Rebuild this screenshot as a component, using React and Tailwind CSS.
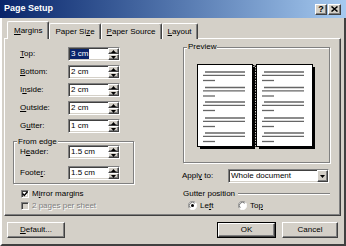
import React from 'react';

const raised =
  'border border-t-white border-l-white border-r-[#404040] border-b-[#404040] shadow-[inset_-1px_-1px_0_#808080]';
const sunken =
  'border border-t-[#808080] border-l-[#808080] border-r-white border-b-white shadow-[inset_1px_1px_0_#404040,inset_-1px_-1px_0_#d4d0c8]';
const etched = 'border border-[#808080] shadow-[inset_1px_1px_0_#fff,1px_1px_0_#fff]';

const U = ({ children }) => <span className="underline underline-offset-[1px]">{children}</span>;

const Arrow = ({ up }) => (
  <svg width="5" height="3" viewBox="0 0 5 3">
    <path d={up ? 'M2.5 0 L5 3 L0 3 Z' : 'M0 0 L5 0 L2.5 3 Z'} fill="#000" />
  </svg>
);

// champ numérique avec flèches
const Spin = ({ value, selected }) => (
  <div className={`w-[52px] h-[14px] bg-white flex ${sunken}`}>
    <div className="flex-1 flex items-center pl-[1px]">
      {selected ? (
        <span className="bg-[#0a246a] text-white leading-[10px] px-[1px]">{value}</span>
      ) : (
        <span className="leading-[10px] px-[1px]">{value}</span>
      )}
    </div>
    <div className="w-[11px] flex flex-col">
      <div className={`flex-1 bg-[#d4d0c8] flex items-center justify-center ${raised}`}>
        <Arrow up />
      </div>
      <div className={`flex-1 bg-[#d4d0c8] flex items-center justify-center ${raised}`}>
        <Arrow />
      </div>
    </div>
  </div>
);

const Row = ({ label, value, selected }) => (
  <div className="flex items-center h-[14px]">
    <span className="w-[48px]">{label}</span>
    <Spin value={value} selected={selected} />
  </div>
);

const Check = ({ checked, disabled }) => (
  <div
    className={`w-[8px] h-[8px] flex items-center justify-center ${disabled ? 'bg-[#d4d0c8]' : 'bg-white'} ${sunken}`}
  >
    {checked && (
      <svg width="6" height="6" viewBox="0 0 6 6">
        <path d="M0.5 2.5 L2.3 4.5 L5.5 0.8" stroke="#000" strokeWidth="1.4" fill="none" />
      </svg>
    )}
  </div>
);

const Radio = ({ on }) => (
  <svg width="9" height="9" viewBox="0 0 12 12">
    <circle cx="6" cy="6" r="5.5" fill="#fff" />
    <path d="M10 2 A5.5 5.5 0 0 0 2 10" stroke="#808080" strokeWidth="1" fill="none" />
    <path d="M2 10 A5.5 5.5 0 0 0 10 2" stroke="#fff" strokeWidth="1" fill="none" />
    <path d="M9 3 A4.2 4.2 0 0 0 3 9" stroke="#404040" strokeWidth="1" fill="none" />
    {on && <circle cx="6" cy="6" r="2" fill="#000" />}
  </svg>
);

// aperçu : livre ouvert
const Book = () => {
  const groups = [8, 23.5, 38, 54, 69];
  const page = (dx) =>
    groups.map((y) => (
      <g key={`${dx}-${y}`} stroke="#666" strokeWidth="1.3">
        <line x1={dx + 8} y1={y} x2={dx + 48} y2={y} />
        <line x1={dx + 6} y1={y + 3.3} x2={dx + 48} y2={y + 3.3} />
        <line x1={dx + 6} y1={y + 8.5} x2={dx + 18} y2={y + 8.5} />
      </g>
    ));
  return (
    <svg width="120" height="88" viewBox="0 0 120 88">
      <rect x="3" y="3" width="55" height="82" fill="#000" />
      <rect x="62" y="3" width="56" height="82" fill="#000" />
      <rect x="0.5" y="0.5" width="55" height="82" fill="#fff" stroke="#000" />
      <rect x="59.5" y="0.5" width="56" height="82" fill="#fff" stroke="#000" />
      {page(0)}
      {page(59)}
      <line x1="56.5" y1="1" x2="56.5" y2="83" stroke="#000" strokeWidth="1.6" strokeDasharray="1.3 1.3" />
      <line x1="58.5" y1="1.6" x2="58.5" y2="83" stroke="#000" strokeWidth="1.6" strokeDasharray="1.3 1.3" />
    </svg>
  );
};

const Tab = ({ children, active }) => (
  <div
    className={`-mb-px relative flex items-center justify-center rounded-t-[2px] bg-[#d4d0c8] border border-b-0 border-t-white border-l-white border-r-[#404040] shadow-[inset_-1px_0_0_#808080] ${
      active ? 'h-[18px] z-10 px-[6px]' : 'h-[16px] px-[5px]'
    }`}
  >
    {children}
  </div>
);

const App = () => {
  return (
    <div className="w-[346px] h-[246px] bg-[#d4d0c8] flex flex-col overflow-hidden text-[8px] text-black font-['Liberation_Sans',Arial,sans-serif]">
      {/* barre de titre */}
      <div className="h-[18px] bg-gradient-to-r from-[#0a246a] to-[#a6caf0] flex items-center pl-[4px] pr-[5px]">
        <span className="text-white font-bold text-[9px]">Page Setup</span>
        <div className="ml-auto flex gap-[1px]">
          <div className={`w-[12px] h-[11px] bg-[#d4d0c8] flex items-center justify-center font-bold text-[9px] leading-none ${raised}`}>
            ?
          </div>
          <div className={`w-[13px] h-[11px] bg-[#d4d0c8] flex items-center justify-center ${raised}`}>
            <svg width="7" height="6" viewBox="0 0 7 6">
              <path d="M0.5 0.5 L6.5 5.5 M6.5 0.5 L0.5 5.5" stroke="#000" strokeWidth="1.5" />
            </svg>
          </div>
        </div>
      </div>

      <div className="flex-1 flex flex-col border-l-2 border-r-2 border-b-2 border-l-white border-r-[#404040] border-b-[#404040] pl-[2px] pr-[3px]">
        {/* onglets */}
        <div className="h-[20px] flex items-end pl-[3px]">
          <Tab active>
            <span><U>M</U>argins</span>
          </Tab>
          <Tab>
            <span>Paper Si<U>z</U>e</span>
          </Tab>
          <Tab>
            <span><U>P</U>aper Source</span>
          </Tab>
          <Tab>
            <span><U>L</U>ayout</span>
          </Tab>
        </div>

        {/* panneau */}
        <div className={`h-[178px] flex ${raised}`}>
          <div className="w-[178px] pl-[8px] pt-[8px] flex flex-col">
            <div className="ml-[7px] flex flex-col gap-[4px]">
              <Row label={<span><U>T</U>op:</span>} value="3 cm" selected />
              <Row label={<span><U>B</U>ottom:</span>} value="2 cm" />
              <Row label={<span>I<U>n</U>side:</span>} value="2 cm" />
              <Row label={<span><U>O</U>utside:</span>} value="2 cm" />
              <Row label={<span>G<U>u</U>tter:</span>} value="1 cm" />
            </div>
            <fieldset className={`mt-[5px] w-[121px] pl-[6px] pb-[3px] ${etched}`}>
              <legend className="-ml-[3px] px-[1px] leading-[7px] bg-[#d4d0c8]">From edge</legend>
              <div className="flex flex-col gap-[7px]">
                <Row label={<span>H<U>e</U>ader:</span>} value="1.5 cm" />
                <Row label={<span>Foote<U>r</U>:</span>} value="1.5 cm" />
              </div>
            </fieldset>
            <div className="mt-[5px] ml-[8px] flex flex-col gap-[3px]">
              <div className="h-[9px] flex items-center gap-[3px]">
                <Check checked />
                <span>M<U>i</U>rror margins</span>
              </div>
              <div className="h-[9px] flex items-center gap-[3px]">
                <Check disabled />
                <span className="text-[#808080] [text-shadow:1px_1px_0_#fff]">2 pages per sheet</span>
              </div>
            </div>
          </div>

          <div className="w-[147px] pt-[4px] flex flex-col">
            <fieldset className={`h-[120px] ${etched}`}>
              <legend className="ml-[3px] px-[1px] leading-[8px] bg-[#d4d0c8]">Preview</legend>
              <div className="ml-[13px] mt-[13px]">
                <Book />
              </div>
            </fieldset>
            <div className="mt-[6px] h-[14px] flex items-center">
              <span className="w-[46px] -ml-[1px]">Appl<U>y</U> to:</span>
              <div className={`w-[101px] h-[14px] bg-white flex ${sunken}`}>
                <span className="flex-1 pl-[2px] flex items-center">Whole document</span>
                <div className={`w-[11px] bg-[#d4d0c8] flex items-center justify-center ${raised}`}>
                  <svg width="5" height="3" viewBox="0 0 5 3">
                    <path d="M0 0 L5 0 L2.5 3 Z" fill="#000" />
                  </svg>
                </div>
              </div>
            </div>
            <div className="mt-[6px] h-[9px] flex items-center">
              <span>Gutter position</span>
              <div className="flex-1 ml-[3px] border-t border-t-[#808080] border-b border-b-white"></div>
            </div>
            <div className="mt-[3px] h-[9px] flex items-center pl-[5px]">
              <Radio on />
              <span className="ml-[3px] w-[38px]">Le<U>f</U>t</span>
              <Radio />
              <span className="ml-[3px]">To<U>p</U></span>
            </div>
          </div>
        </div>

        {/* boutons */}
        <div className="mt-[6px] h-[16px] flex">
          <div className={`ml-[3px] w-[58px] bg-[#d4d0c8] flex items-center justify-center ${raised}`}>
            <span><U>D</U>efault...</span>
          </div>
          <div className="ml-auto w-[59px] border border-black flex">
            <div className={`flex-1 flex items-center justify-center ${raised}`}>OK</div>
          </div>
          <div className={`ml-[6px] mr-[3px] w-[56px] flex items-center justify-center ${raised}`}>Cancel</div>
        </div>
      </div>
    </div>
  );
};

export default App;
